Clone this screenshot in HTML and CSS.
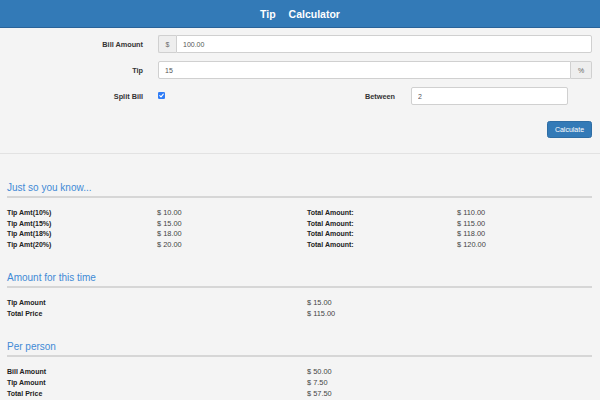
FILE: index.html
```html
<!DOCTYPE html>
<html>
<head>
<meta charset="utf-8">
<title>Tip Calculator</title>
<link rel="stylesheet" href="styles.css">
</head>
<body>
<header class="topbar">
  <h1 class="title"><span>Tip</span><span>Calculator</span></h1>
</header>

<form class="calc-form">
  <div class="form-row">
    <label class="form-label">Bill Amount</label>
    <div class="input-group">
      <span class="addon addon-left">$</span>
      <input class="field field-right" type="text" value="100.00">
    </div>
  </div>
  <div class="form-row">
    <label class="form-label">Tip</label>
    <div class="input-group">
      <input class="field field-left" type="text" value="15">
      <span class="addon addon-right">%</span>
    </div>
  </div>
  <div class="form-row">
    <label class="form-label">Split Bill</label>
    <div class="split">
      <span class="check">
        <svg width="7" height="7" viewBox="0 0 7 7"><rect x="0" y="0" width="7" height="7" rx="1.3" fill="#2f7cf6"/><path d="M1.8 3.7 L3 4.9 L5.3 2.1" fill="none" stroke="#fff" stroke-width="1.1" stroke-linecap="round" stroke-linejoin="round"/></svg>
      </span>
      <label class="form-label">Between</label>
      <input class="field" type="text" value="2">
    </div>
  </div>
  <div class="actions">
    <button class="btn" type="button">Calculate</button>
  </div>
</form>

<main class="results">
  <section class="block">
    <h3 class="block-title">Just so you know...</h3>
    <div class="grid4">
      <span class="k">Tip Amt(10%)</span><span class="v">$ 10.00</span><span class="k">Total Amount:</span><span class="v">$ 110.00</span>
      <span class="k">Tip Amt(15%)</span><span class="v">$ 15.00</span><span class="k">Total Amount:</span><span class="v">$ 115.00</span>
      <span class="k">Tip Amt(18%)</span><span class="v">$ 18.00</span><span class="k">Total Amount:</span><span class="v">$ 118.00</span>
      <span class="k">Tip Amt(20%)</span><span class="v">$ 20.00</span><span class="k">Total Amount:</span><span class="v">$ 120.00</span>
    </div>
  </section>
  <section class="block">
    <h3 class="block-title">Amount for this time</h3>
    <div class="grid2">
      <span class="k">Tip Amount</span><span class="v">$ 15.00</span>
      <span class="k">Total Price</span><span class="v">$ 115.00</span>
    </div>
  </section>
  <section class="block">
    <h3 class="block-title">Per person</h3>
    <div class="grid2">
      <span class="k">Bill Amount</span><span class="v">$ 50.00</span>
      <span class="k">Tip Amount</span><span class="v">$ 7.50</span>
      <span class="k">Total Price</span><span class="v">$ 57.50</span>
    </div>
  </section>
</main>
</body>
</html>
```

FILE: styles.css
```css
* { box-sizing: border-box; }
html, body { margin: 0; padding: 0; }
body {
  background: #f4f4f4;
  font-family: "Liberation Sans", Arial, sans-serif;
  color: #333;
  width: 600px;
  overflow: hidden;
}

.topbar {
  height: 28px;
  background: #337ab7;
  border-bottom: 1px solid #2a6399;
  display: flex;
  align-items: center;
  justify-content: center;
}
.title {
  margin: 0;
  color: #fff;
  font-size: 10.5px;
  font-weight: bold;
  display: flex;
  gap: 13px;
  line-height: 1;
  padding-top: 1px;
}

.calc-form {
  padding: 7px 8px 15px 0;
  border-bottom: 1px solid #e2e2e2;
  display: flex;
  flex-direction: column;
  gap: 8px;
}
.form-row {
  display: grid;
  grid-template-columns: 143px 1fr;
  column-gap: 15px;
  align-items: center;
  height: 18px;
}
.form-label {
  text-align: right;
  font-size: 7.3px;
  font-weight: bold;
  color: #333;
}
.input-group { display: flex; height: 18px; }
.field {
  height: 18px;
  border: 1px solid #d0d0d0;
  border-radius: 2px;
  background: #fff;
  font-family: "Liberation Sans", Arial, sans-serif;
  font-size: 7px;
  color: #555;
  padding: 0 6px;
  margin: 0;
  outline: none;
  min-width: 0;
  flex: 1;
}
.field-right { border-top-left-radius: 0; border-bottom-left-radius: 0; }
.field-left { border-top-right-radius: 0; border-bottom-right-radius: 0; }
.addon {
  display: flex;
  align-items: center;
  justify-content: center;
  background: #eeeeee;
  border: 1px solid #d0d0d0;
  color: #666;
  font-size: 7px;
}
.addon-left { width: 18px; border-right: none; border-radius: 2px 0 0 2px; }
.addon-right { width: 21px; border-left: none; border-radius: 0 2px 2px 0; }

.split {
  display: grid;
  grid-template-columns: auto 1fr 157px;
  column-gap: 16px;
  align-items: center;
  padding-right: 24px;
  height: 18px;
}
.check { display: flex; width: 7px; height: 7px; margin-top: -1px; }
.split .field { width: 157px; }

.actions {
  display: flex;
  justify-content: flex-end;
  margin-top: 8px;
}
.btn {
  width: 45px;
  height: 17px;
  background: #337ab7;
  border: 1px solid #2e6da4;
  border-radius: 2.5px;
  color: #fff;
  font-family: "Liberation Sans", Arial, sans-serif;
  font-size: 7px;
  padding: 0;
}

.results { padding: 28px 8px 0 7px; }
.block + .block { margin-top: 21.5px; }
.block-title {
  margin: 0;
  font-size: 10px;
  line-height: 12px;
  font-weight: normal;
  color: #3f8ad6;
  padding-bottom: 2px;
  border-bottom: 2px solid #d6d6d6;
}
.grid4, .grid2 {
  display: grid;
  margin-top: 10px;
  font-size: 7px;
  line-height: 10.7px;
}
.grid4 { grid-template-columns: 150px 150px 150px 1fr; }
.grid2 { grid-template-columns: 300px 1fr; }
.k { font-weight: bold; color: #222; }
.v { color: #444; font-size: 7.4px; }
```
